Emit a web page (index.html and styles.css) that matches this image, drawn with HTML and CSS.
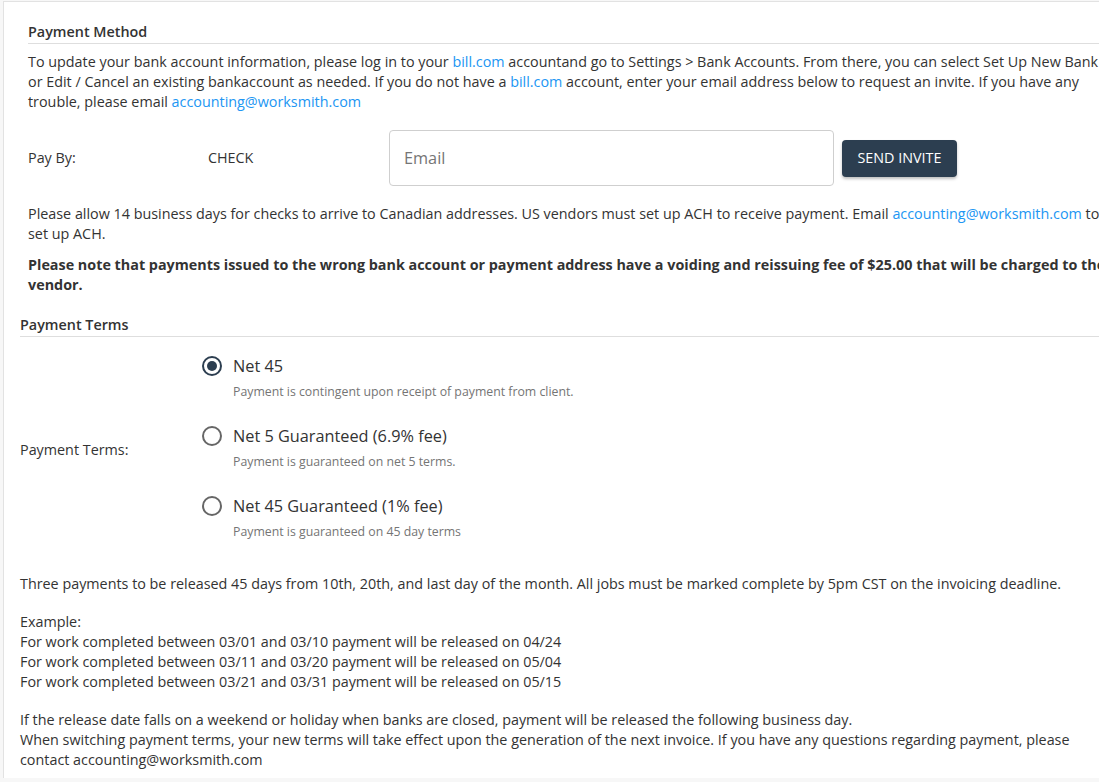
FILE: index.html
```html
<!DOCTYPE html>
<html>
<head>
<meta charset="utf-8">
<link rel="stylesheet" href="styles.css">
</head>
<body>
<div class="card">
  <section class="method">
    <h2 class="section-title">Payment Method</h2>
    <p class="text">To update your bank account information, please log in to your <a class="link">bill.com</a> accountand go to Settings &gt; Bank Accounts. From there, you can select Set Up New Bank or Edit / Cancel an existing bankaccount as needed. If you do not have a <a class="link">bill.com</a> account, enter your email address below to request an invite. If you have any trouble, please email <a class="link">accounting@worksmith.com</a></p>
    <div class="pay-row">
      <div class="pay-label">Pay By:</div>
      <div class="pay-value">CHECK</div>
      <input class="email" type="text" placeholder="Email">
      <button class="btn">SEND INVITE</button>
    </div>
    <p class="text gap">Please allow 14 business days for checks to arrive to Canadian addresses. US vendors must set up ACH to receive payment. Email <a class="link">accounting@worksmith.com</a> to set up ACH.</p>
    <p class="text bold small-gap">Please note that payments issued to the wrong bank account or payment address have a voiding and reissuing fee of $25.00 that will be charged to the vendor.</p>
  </section>
  <section class="terms">
    <h2 class="section-title">Payment Terms</h2>
    <div class="terms-row">
      <div class="terms-label">Payment Terms:</div>
      <div class="options">
        <div class="option">
          <div class="option-title"><span class="radio checked"></span>Net 45</div>
          <div class="option-desc">Payment is contingent upon receipt of payment from client.</div>
        </div>
        <div class="option">
          <div class="option-title"><span class="radio"></span>Net 5 Guaranteed (6.9% fee)</div>
          <div class="option-desc">Payment is guaranteed on net 5 terms.</div>
        </div>
        <div class="option">
          <div class="option-title"><span class="radio"></span>Net 45 Guaranteed (1% fee)</div>
          <div class="option-desc">Payment is guaranteed on 45 day terms</div>
        </div>
      </div>
    </div>
    <p class="text info">Three payments to be released 45 days from 10th, 20th, and last day of the month. All jobs must be marked complete by 5pm CST on the invoicing deadline.</p>
    <p class="text para">Example:<br>For work completed between 03/01 and 03/10 payment will be released on 04/24<br>For work completed between 03/11 and 03/20 payment will be released on 05/04<br>For work completed between 03/21 and 03/31 payment will be released on 05/15</p>
    <p class="text para">If the release date falls on a weekend or holiday when banks are closed, payment will be released the following business day.<br>When switching payment terms, your new terms will take effect upon the generation of the next invoice. If you have any questions regarding payment, please contact accounting@worksmith.com</p>
  </section>
</div>
</body>
</html>
```

FILE: styles.css
```css
html, body {
  margin: 0;
  padding: 0;
  overflow: hidden;
  background: #f7f7f7;
}
body {
  font-family: "Open Sans", "Liberation Sans", sans-serif;
  font-size: 14.35px;
  line-height: 20px;
  color: #333;
  width: 1099px;
  height: 782px;
}
.card {
  margin-left: 3px;
  margin-top: 1px;
  width: 1130px;
  background: #fff;
  border-top: 1px solid #e2e2e2;
  border-left: 1px solid #e2e2e2;
  padding: 20px 0 8px 16px;
  box-sizing: border-box;
}
.method {
  margin-left: 8px;
  width: 1084px;
}
.terms {
  width: 1090px;
}
.section-title {
  margin: 0;
  font-size: 14.35px;
  font-weight: 600;
  line-height: 20px;
  padding-bottom: 1px;
  border-bottom: 1px solid #dedede;
  color: #333;
}
.text {
  margin: 8px 0 0;
}
.link {
  color: #2196f3;
  text-decoration: none;
}
.bold {
  font-weight: 700;
}
.pay-row {
  display: flex;
  align-items: center;
  margin-top: 18px;
}
.pay-label {
  width: 180px;
}
.pay-value {
  width: 181px;
}
.email {
  width: 445px;
  height: 56px;
  box-sizing: border-box;
  border: 1px solid #cfcfcf;
  border-radius: 4px;
  padding: 0 14px;
  font-family: "Open Sans", "Liberation Sans", sans-serif;
  font-size: 16.3px;
  color: #333;
  outline: none;
}
.email::placeholder {
  color: #757575;
}
.btn {
  margin-left: 8px;
  height: 37px;
  width: 115px;
  border: none;
  border-radius: 4px;
  background: #2c3e50;
  color: #fff;
  font-family: "Open Sans", "Liberation Sans", sans-serif;
  font-size: 14.35px;
  padding: 0 0 2px;
  box-shadow: 0 2px 3px rgba(0,0,0,0.25);
}
.gap {
  margin-top: 18px;
}
.small-gap {
  margin-top: 11px;
}
.terms .section-title {
  margin-top: 20px;
}
.terms-row {
  display: flex;
  align-items: center;
  margin-top: 17px;
}
.terms-label {
  width: 182px;
  padding-top: 4px;
}
.option + .option {
  margin-top: 23px;
}
.option-title {
  display: flex;
  align-items: center;
  font-size: 16.3px;
  line-height: 24px;
}
.radio {
  width: 20px;
  height: 20px;
  box-sizing: border-box;
  border: 2px solid #666;
  border-radius: 50%;
  margin-right: 11px;
  position: relative;
  flex: none;
}
.radio.checked {
  border-color: #2c3e50;
}
.radio.checked::after {
  content: "";
  position: absolute;
  left: 3px;
  top: 3px;
  width: 10px;
  height: 10px;
  border-radius: 50%;
  background: #2c3e50;
}
.option-desc {
  margin-top: 5px;
  margin-left: 31px;
  font-size: 12.3px;
  line-height: 18px;
  color: #757575;
}
.info {
  margin-top: 33px;
}
.para {
  margin-top: 18px;
}
```
